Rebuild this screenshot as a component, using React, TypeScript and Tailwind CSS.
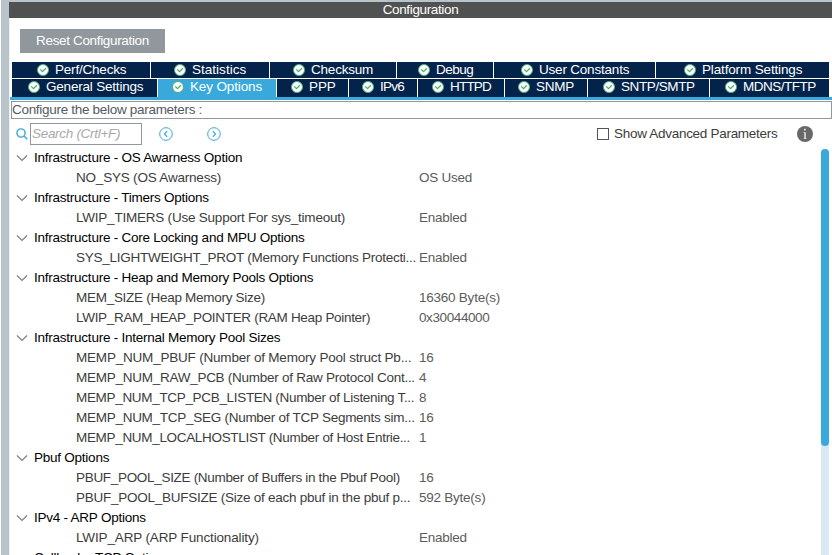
type Tab = { label: string; cls: string; track: string; active?: boolean };

const topTabs: Tab[] = [
  { label: "Perf/Checks", cls: "w-[138px] pl-[25px]", track: "tracking-[-0.2px]" },
  { label: "Statistics", cls: "w-[118px] pl-[23px]", track: "tracking-[0.02px]" },
  { label: "Checksum", cls: "w-[126px] pl-[23px]", track: "tracking-[-0.2px]" },
  { label: "Debug", cls: "w-[96px] pl-[21px]", track: "tracking-[-0.5px]" },
  { label: "User Constants", cls: "w-[161px] pl-[27px]", track: "tracking-[-0.2px]" },
  { label: "Platform Settings", cls: "w-[173px] pl-[28px]", track: "tracking-[-0.15px]" },
];

const bottomTabs: Tab[] = [
  { label: "General Settings", cls: "w-[145px] pl-4", track: "tracking-[-0.2px]" },
  { label: "Key Options", cls: "w-[118px] pl-3.5", track: "tracking-[-0.14px]", active: true },
  { label: "PPP", cls: "w-[71px] pl-3.5", track: "tracking-[-0.1px]" },
  { label: "IPv6", cls: "w-[68px] pl-[13px]", track: "tracking-[-0.75px]" },
  { label: "HTTPD", cls: "w-[86px] pl-3.5", track: "tracking-[-0.8px]" },
  { label: "SNMP", cls: "w-[82px] pl-[13px]", track: "tracking-[-0.25px]" },
  { label: "SNTP/SMTP", cls: "w-[121px] pl-[15px]", track: "tracking-[-0.4px]" },
  { label: "MDNS/TFTP", cls: "w-[119px] pl-[15px]", track: "tracking-[-0.5px]" },
];

type Item = { name: string; value: string; track: string; valueTrack?: string };
type Group = { title: string; items: Item[] };

const groups: Group[] = [
  {
    title: "Infrastructure - OS Awarness Option",
    items: [{ name: "NO_SYS (OS Awarness)", value: "OS Used", track: "tracking-[-0.2px]" }],
  },
  {
    title: "Infrastructure - Timers Options",
    items: [{ name: "LWIP_TIMERS (Use Support For sys_timeout)", value: "Enabled", track: "tracking-[-0.22px]" }],
  },
  {
    title: "Infrastructure - Core Locking and MPU Options",
    items: [
      { name: "SYS_LIGHTWEIGHT_PROT (Memory Functions Protecti...", value: "Enabled", track: "tracking-[-0.26px]" },
    ],
  },
  {
    title: "Infrastructure - Heap and Memory Pools Options",
    items: [
      { name: "MEM_SIZE (Heap Memory Size)", value: "16360 Byte(s)", track: "tracking-[-0.28px]" },
      {
        name: "LWIP_RAM_HEAP_POINTER (RAM Heap Pointer)",
        value: "0x30044000",
        track: "tracking-[-0.31px]",
        valueTrack: "tracking-[-0.4px]",
      },
    ],
  },
  {
    title: "Infrastructure - Internal Memory Pool Sizes",
    items: [
      { name: "MEMP_NUM_PBUF (Number of Memory Pool struct Pb...", value: "16", track: "tracking-[-0.2px]" },
      { name: "MEMP_NUM_RAW_PCB (Number of Raw Protocol Cont...", value: "4", track: "tracking-[-0.26px]" },
      { name: "MEMP_NUM_TCP_PCB_LISTEN (Number of Listening T...", value: "8", track: "tracking-[-0.32px]" },
      { name: "MEMP_NUM_TCP_SEG (Number of TCP Segments sim...", value: "16", track: "tracking-[-0.27px]" },
      { name: "MEMP_NUM_LOCALHOSTLIST (Number of Host Entrie...", value: "1", track: "tracking-[-0.32px]" },
    ],
  },
  {
    title: "Pbuf Options",
    items: [
      { name: "PBUF_POOL_SIZE (Number of Buffers in the Pbuf Pool)", value: "16", track: "tracking-[-0.31px]" },
      { name: "PBUF_POOL_BUFSIZE (Size of each pbuf in the pbuf p...", value: "592 Byte(s)", track: "tracking-[-0.25px]" },
    ],
  },
  {
    title: "IPv4 - ARP Options",
    items: [{ name: "LWIP_ARP (ARP Functionality)", value: "Enabled", track: "tracking-[-0.14px]" }],
  },
  { title: "Callback - TCP Options", items: [] },
];

function CheckIcon() {
  return (
    <svg width="12" height="12" viewBox="0 0 12 12" className="mt-0.5 shrink-0">
      <circle cx="6" cy="6" r="5.5" fill="#fff" stroke="#4cb074" strokeWidth="1" />
      <path d="M3.2 5.4 5.5 7.7 8.9 4.3" fill="none" stroke="#4cb074" strokeWidth="1.3" />
    </svg>
  );
}

function TabRow({ tabs, height }: { tabs: Tab[]; height: string }) {
  return (
    <div className={`flex gap-px pl-0.5 ${height}`}>
      {tabs.map((t) => (
        <div
          key={t.label}
          className={`flex h-full shrink-0 items-start gap-1.5 whitespace-nowrap text-white ${t.cls} ${t.active ? "bg-[#39a9dc]" : "bg-[#03234b]"}`}
        >
          <CheckIcon />
          <span className={`leading-4 ${t.track}`}>{t.label}</span>
        </div>
      ))}
    </div>
  );
}

function CircleArrow({ right }: { right?: boolean }) {
  return (
    <svg width="14" height="14" viewBox="0 0 14 14" fill="none" stroke="#39a9dc" className="shrink-0">
      <circle cx="7" cy="7" r="6.3" />
      <path d={right ? "M5.8 4.2 8.5 7 5.8 9.8" : "M8.2 4.2 5.5 7 8.2 9.8"} strokeWidth="1.2" />
    </svg>
  );
}

export default function App() {
  return (
    <div className="flex h-[555px] w-[832px] overflow-hidden bg-white pl-px font-['Liberation_Sans',Arial,sans-serif] text-[13.5px] tracking-[-0.24px] text-[#3c3c3c]">
      <div className="w-2 shrink-0 bg-[#b9c4ca]" />
      <div className="flex min-w-0 flex-1 flex-col">
        <div className="h-[18px] shrink-0 border-t-2 border-[#b9c4ca] bg-[#4f5251] text-center leading-[15px] tracking-[-0.36px] text-white">
          Configuration
        </div>
        <div className="flex min-h-0 flex-1 flex-col border-l border-[#eef0f2]">
          <div className="h-11 shrink-0 pt-[11px] pl-2.5">
            <button className="block h-6 w-[145px] bg-[#90989e] leading-6 tracking-[-0.34px] text-white">
              Reset Configuration
            </button>
          </div>
          <TabRow tabs={topTabs} height="h-4" />
          <div className="h-px shrink-0" />
          <TabRow tabs={bottomTabs} height="h-[18px]" />
          <div className="h-[3px] shrink-0 bg-[#39a9dc]" />
          <div className="mt-px ml-px h-[18px] shrink-0 border border-[#90989e] leading-4 tracking-[-0.3px] text-[#525a63]">
            Configure the below parameters :
          </div>
          <div className="flex h-[29px] shrink-0 items-center pl-1.5">
            <svg width="12" height="12" viewBox="0 0 12 12" fill="none" stroke="#39a9dc" strokeWidth="1.4" className="mr-0.5">
              <circle cx="5" cy="5" r="4.1" />
              <path d="m8 8 3.3 3.3" />
            </svg>
            <div className="h-[22px] w-28 border border-[#90989e] pl-px leading-5 tracking-[-0.3px] text-[#a9a9a9] italic">
              Search (Crtl+F)
            </div>
            <div className="ml-[17px] flex gap-[34px]">
              <CircleArrow />
              <CircleArrow right />
            </div>
            <span className="ml-[376px] size-3 border border-[#555]" />
            <span className="mt-px ml-[5px] w-[163px] leading-5 tracking-[-0.29px] whitespace-nowrap">
              Show Advanced Parameters
            </span>
            <svg width="16" height="16" viewBox="0 0 16 16" className="ml-5">
              <circle cx="8" cy="8" r="8" fill="#686868" />
              <path d="M7.1 2.8h1.7v1.7H7.1zM6.6 6.2h2.2v6.2h.9v.7H6.5v-.7h.8V6.9h-.7z" fill="#e8e8e8" />
            </svg>
          </div>
          <div className="flex min-h-0 flex-1">
            <div className="w-[811px] shrink-0">
              {groups.map((g) => (
                <section key={g.title}>
                  <div className="flex h-5 items-center pl-1.5 leading-5 text-black">
                    <svg width="12" height="8" viewBox="0 0 12 8" fill="none" stroke="#808080" strokeWidth="1.2" className="mr-1.5">
                      <path d="m1 1.5 5 5 5-5" />
                    </svg>
                    <span>{g.title}</span>
                  </div>
                  {g.items.map((item) => (
                    <div key={item.name} className="flex h-5 pl-[66px] leading-5 whitespace-nowrap">
                      <span className={`w-[343px] ${item.track}`}>{item.name}</span>
                      <span className={`text-[#5c5c5c] ${item.valueTrack ?? ""}`}>{item.value}</span>
                    </div>
                  ))}
                </section>
              ))}
            </div>
            <div className="mt-px w-2 shrink-0 rounded-t-full bg-[#d9e8f4]">
              <div className="h-[297px] rounded-full bg-[#39a9dc]" />
            </div>
          </div>
        </div>
      </div>
    </div>
  );
}
